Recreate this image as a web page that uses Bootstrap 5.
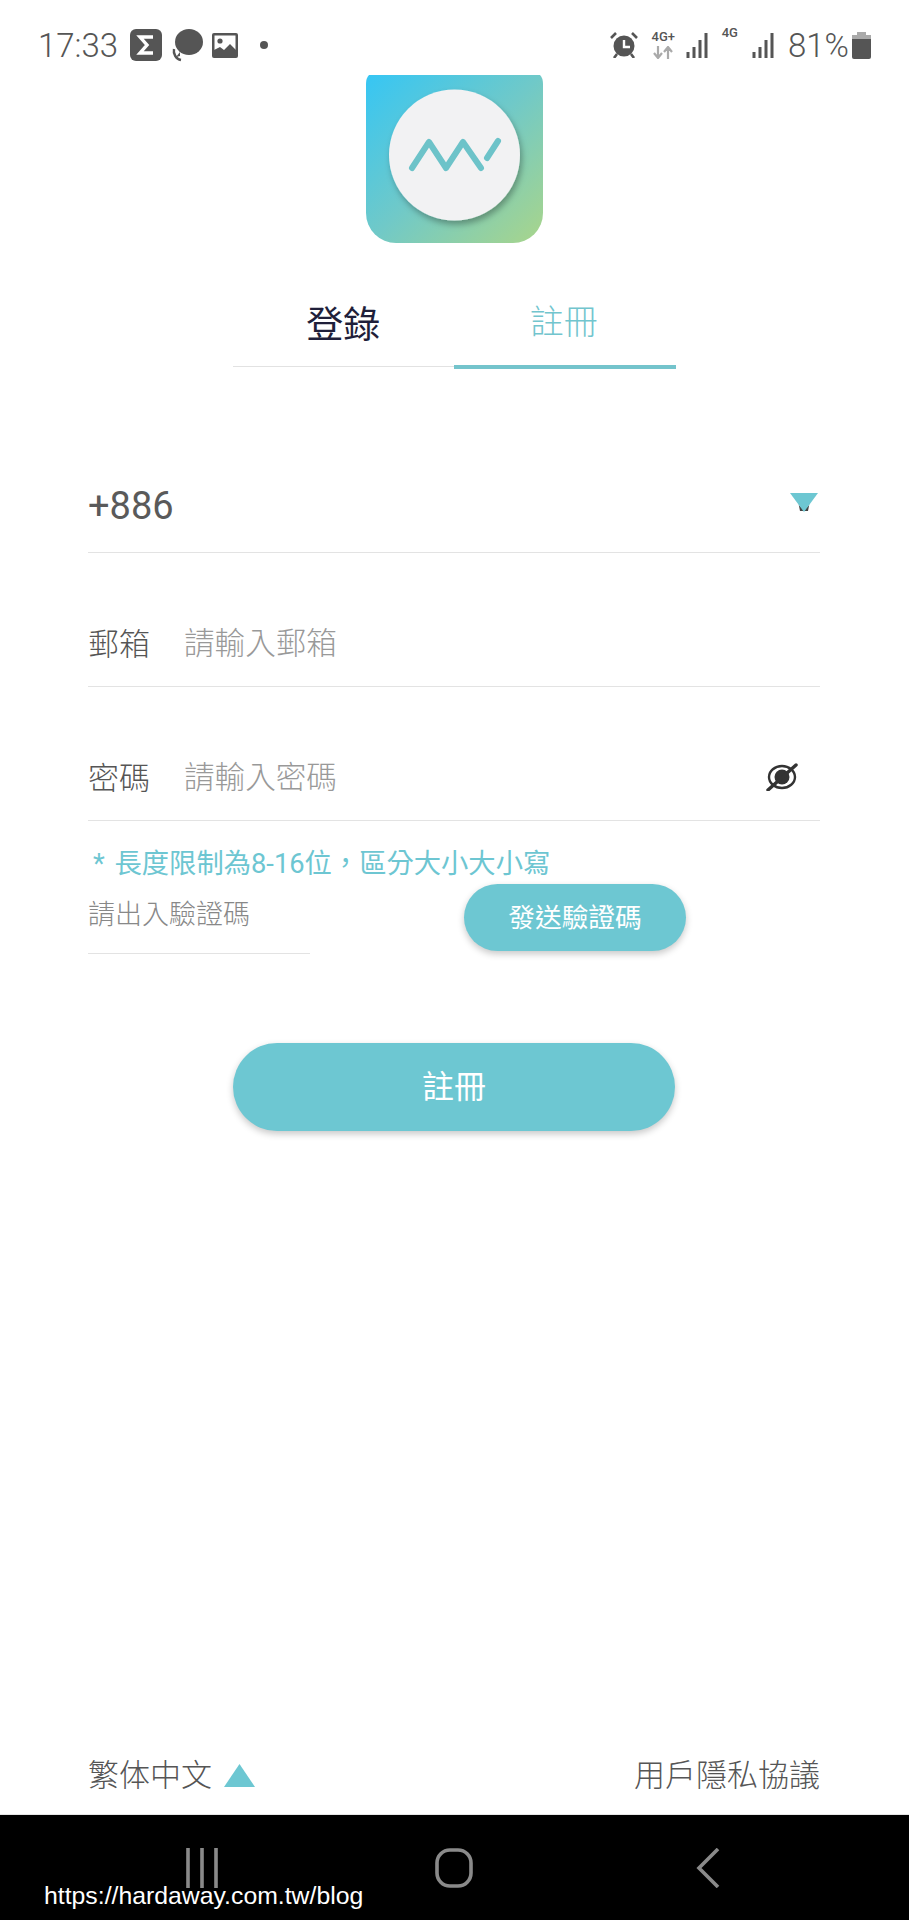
<!DOCTYPE html>
<html lang="zh-Hant">
<head>
    <meta charset="UTF-8">
    <title>註冊</title>
    <link href="https://cdn.jsdelivr.net/npm/bootstrap@5.3.2/dist/css/bootstrap.min.css" rel="stylesheet">
    <style>
        body { font-family: Roboto, "Noto Sans CJK TC", sans-serif; background: #fff; color: #555; font-weight: 300; }
        .screen { height: 1920px; position: relative; overflow: hidden; }

        .status-bar { height: 75px; padding: 15px 38px 0 38px; color: #555; }
        .status-time, .status-batt { font-size: 33px; line-height: 1; font-weight: 300; }
        .net-label { font-size: 13px; font-weight: 500; line-height: 1; color: #555; }
        .net-stack { width: 27px; height: 30px; margin-left: 12px; }
        .net-arrows { margin-top: 3px; }
        .ic-sigma { margin-left: 12px; }
        .ic-bubble { margin-left: 9px; }
        .ic-image { margin-left: 9px; }
        .ic-dot { margin-left: 22px; }
        .ic-signal { margin-left: 9px; }
        .ic-signal2 { margin-left: 14px; }
        .net-4g { margin: -3px 0 0 12px; }
        .status-batt { margin-left: 12px; }
        .ic-batt { margin-left: 3px; }

        .app-logo { width: 177px; height: 168px; display: block; }

        .tabs-row { width: 443px; }
        .tab-item { flex: 1; height: 124px; padding-top: 64px; line-height: 1; text-align: center; }
        .tab-login { font-size: 37px; color: #1f1f3a; border-bottom: 1px solid #e2e2e2; font-weight: 400; }
        .tab-signup { font-size: 34px; color: #72c5ce; border-bottom: 4px solid #74c4cc; margin-bottom: -2px; padding: 62px 2px 0 0; height: 126px; }

        .form-wrap { padding: 0 89px 0 88px; }
        .field-row { border-bottom: 1px solid #e3e3e3; line-height: 1; }
        .field-phone { margin-top: 116px; height: 70px; font-size: 38px; padding-top: 4px; font-weight: 400; color: #5a5a5a; }
        .field-text { height: 134px; padding-top: 76px; font-size: 31px; }
        .field-label { width: 96px; color: #555; }
        .field-hint { color: #999; font-size: 30.6px; }
        .ic-drop { margin: 6px 2px 0 0; }
        .ic-eye { margin: 0 22px 0 0; }
        .pw-hint { color: #6dc6d2; font-size: 27.3px; line-height: 1; margin-top: 30px; padding-left: 5px; font-weight: 400; word-spacing: 3px; }
        .code-row { margin-top: 6px; }
        .code-input { width: 222px; height: 81px; padding-top: 29px; color: #888; font-size: 27px; line-height: 1; border-bottom: 1px solid #e3e3e3; margin-top: -11px; }
        .btn-teal { background: #6dc7d2; color: #fff; border: 0; box-shadow: 0 3px 7px rgba(0, 0, 0, .22); font-weight: 400; }
        .btn-teal:hover { background: #6dc7d2; color: #fff; }
        .btn-send { width: 222px; height: 67px; margin-left: 154px; font-size: 26.7px; padding: 0; }
        .btn-signup { width: 442px; height: 88px; margin-top: 89px; font-size: 32px; padding: 0; display: block; }

        .foot-row { font-size: 31px; line-height: 1; padding: 0 89px 23px 88px; }
        .lang-arrow { width: 31px; height: 23px; margin-left: 12px; }

        .nav-bar { height: 106px; background: #000; border-top: 1px solid #e5e5e5; }
        .nav-recent { padding-left: 102px; }
        .nav-back { padding-right: 98px; }
        .watermark { position: absolute; left: 44px; top: 1881px; color: #fff; font: 400 24.8px/1.2 "Liberation Sans", sans-serif; }
    </style>
</head>
<body>
<div class="screen d-flex flex-column">

    <!-- status bar -->
    <div class="status-bar d-flex justify-content-between align-items-center flex-shrink-0">
        <div class="d-flex align-items-center">
            <span class="status-time">17:33</span>
            <svg class="ic-sigma" width="32" height="32" viewBox="0 0 32 32"><rect width="32" height="32" rx="6" fill="#555"/><path d="M23 8H10l7 8-7 8h13" fill="none" stroke="#fff" stroke-width="3.4"/></svg>
            <svg class="ic-bubble" width="32" height="34" viewBox="0 0 32 34"><ellipse cx="18" cy="14" rx="14" ry="13" fill="#555"/><path d="M9 24l-4 5 4-1z" fill="#555"/><path d="M3 21c-1 5 2 10 7 11" fill="none" stroke="#555" stroke-width="2.4"/></svg>
            <svg class="ic-image" width="26" height="25" viewBox="0 0 26 25"><rect width="26" height="25" rx="2" fill="#555"/><rect x="2.500" y="2.500" width="21" height="20" fill="#fff"/><circle cx="8" cy="8" r="2.600" fill="#555"/><path d="M2 23v-6l6-3 4 3 6-6 6 6v6z" fill="#555"/></svg>
            <svg class="ic-dot" width="8" height="8" viewBox="0 0 8 8"><circle cx="4" cy="4" r="4" fill="#555"/></svg>
        </div>
        <div class="d-flex align-items-center">
            <svg width="28" height="26" viewBox="0 0 28 26"><circle cx="14" cy="14" r="10.500" fill="#555"/><path d="M14 8v7h6" fill="none" stroke="#fff" stroke-width="2.400"/><path d="M1 6l5-5M27 6l-5-5M7 22l-3 4M21 22l3 4" stroke="#555" stroke-width="2.600"/></svg>
            <div class="net-stack d-flex flex-column align-items-center">
                <span class="net-label">4G+</span>
                <svg class="net-arrows" width="20" height="13" viewBox="0 0 20 13"><path d="M5 0v11M1 7l4 5 4-5M15 13V2M11 6l4-5 4 5" fill="none" stroke="#aaa" stroke-width="2.200"/></svg>
            </div>
            <svg class="ic-signal" width="24" height="25" viewBox="0 0 24 25"><path d="M2 19v6M8 14v11M14 7v18M20 0v25" stroke="#555" stroke-width="3"/></svg>
            <span class="net-label net-4g align-self-start">4G</span>
            <svg class="ic-signal2" width="24" height="25" viewBox="0 0 24 25"><path d="M2 19v6M8 14v11M14 7v18M20 0v25" stroke="#555" stroke-width="3"/></svg>
            <span class="status-batt">81%</span>
            <svg class="ic-batt" width="19" height="27" viewBox="0 0 19 27"><path d="M5 0h9v3h5v5H0V3h5z" fill="#aaa"/><path d="M0 7h19v18a2 2 0 0 1-2 2H2a2 2 0 0 1-2-2z" fill="#555"/></svg>
        </div>
    </div>

    <!-- app logo -->
    <svg class="app-logo mx-auto flex-shrink-0" viewBox="0 0 177 168">
        <defs>
            <linearGradient id="logoGrad" x1="0" y1="0" x2="1" y2="1">
                <stop offset="0" stop-color="#36c6f4"/>
                <stop offset=".5" stop-color="#70c9c8"/>
                <stop offset="1" stop-color="#a9d58a"/>
            </linearGradient>
            <filter id="discShadow" x="-20%" y="-20%" width="140%" height="140%">
                <feDropShadow dx="2" dy="4" stdDeviation="3" flood-color="#000" flood-opacity=".3"/>
            </filter>
        </defs>
        <path d="M3 0H174Q177 3 177 9V138a30 30 0 0 1-30 30H30a30 30 0 0 1-30-30V9Q0 3 3 0z" fill="url(#logoGrad)"/>
        <circle cx="88.500" cy="80" r="65.500" fill="#f2f2f3" filter="url(#discShadow)"/>
        <path d="M46 93L63 67 80 93 97 67 115 93M121 83L132 66" fill="none" stroke="#6dc3c9" stroke-width="6" stroke-linecap="round" stroke-linejoin="round"/>
    </svg>

    <!-- login / sign-up tabs -->
    <div class="tabs-row d-flex mx-auto flex-shrink-0">
        <div class="tab-item tab-login">登錄</div>
        <div class="tab-item tab-signup">註冊</div>
    </div>

    <!-- form -->
    <div class="form-wrap flex-shrink-0">
        <div class="field-row field-phone d-flex justify-content-between align-items-start">
            <span>+886</span>
            <svg class="ic-drop" width="28" height="19" viewBox="0 0 28 19"><path d="M8 8a6 7 0 0 0 12 0l-2 10h-8z" fill="#444"/><path d="M0 0h28L14 19z" fill="#6dc7d2"/></svg>
        </div>
        <div class="field-row field-text d-flex align-items-start">
            <span class="field-label">郵箱</span>
            <span class="field-hint">請輸入郵箱</span>
        </div>
        <div class="field-row field-text d-flex align-items-start">
            <span class="field-label">密碼</span>
            <span class="field-hint flex-grow-1">請輸入密碼</span>
            <svg class="ic-eye" width="32" height="28" viewBox="0 0 32 28"><ellipse cx="16" cy="14" rx="13" ry="11" fill="none" stroke="#333" stroke-width="2.400"/><circle cx="16" cy="14" r="7.500" fill="#333"/><path d="M2 27L30 2" stroke="#333" stroke-width="3.400" stroke-linecap="round"/></svg>
        </div>
        <div class="pw-hint">* 長度限制為8-16位，區分大小大小寫</div>
        <div class="code-row d-flex align-items-start">
            <div class="code-input">請出入驗證碼</div>
            <button type="button" class="btn btn-teal btn-send rounded-pill">發送驗證碼</button>
        </div>
        <button type="button" class="btn btn-teal btn-signup rounded-pill mx-auto">註冊</button>
    </div>

    <div class="flex-grow-1"></div>

    <!-- footer links -->
    <div class="foot-row d-flex justify-content-between align-items-center flex-shrink-0">
        <div class="d-flex align-items-center">
            <span>繁体中文</span>
            <svg class="lang-arrow" viewBox="0 0 31 23"><path d="M15.500 0L31 23H0z" fill="#6dc7d2"/></svg>
        </div>
        <span>用戶隱私協議</span>
    </div>

    <!-- android nav -->
    <div class="nav-bar row g-0 align-items-center flex-shrink-0">
        <div class="col-4 text-center nav-recent">
            <svg width="34" height="40" viewBox="0 0 34 40"><path d="M3 0v40M17 0v40M31 0v40" stroke="#8a8a8a" stroke-width="3.600"/></svg>
        </div>
        <div class="col-4 text-center">
            <svg width="38" height="40" viewBox="0 0 38 40"><rect x="2" y="2" width="34" height="36" rx="13" fill="none" stroke="#8a8a8a" stroke-width="3.600"/></svg>
        </div>
        <div class="col-4 text-center nav-back">
            <svg width="24" height="40" viewBox="0 0 24 40"><path d="M22 1L3 20l19 19" fill="none" stroke="#8a8a8a" stroke-width="3.600"/></svg>
        </div>
    </div>

    <div class="watermark">https://hardaway.com.tw/blog</div>
</div>

<script src="https://cdn.jsdelivr.net/npm/bootstrap@5.3.2/dist/js/bootstrap.bundle.min.js"></script>
</body>
</html>
